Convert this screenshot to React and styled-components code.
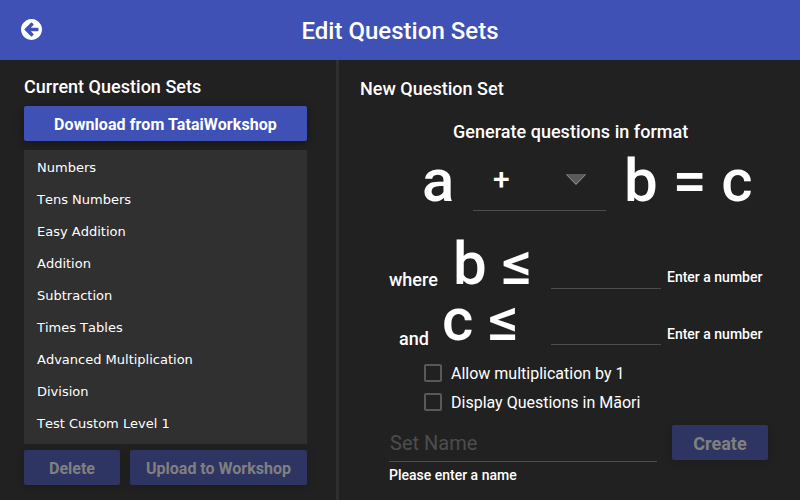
import React from "react";
import styled, { createGlobalStyle } from "styled-components";

const GlobalStyle = createGlobalStyle`
  * { box-sizing: border-box; }
  html, body { margin: 0; background: #212121; }
  body { overflow: hidden; }
`;

const Page = styled.div`
  width: 800px;
  height: 500px;
  display: flex;
  flex-direction: column;
  background: #212121;
  color: #fff;
  font-family: Roboto, sans-serif;
`;

const Header = styled.header`
  height: 60px;
  flex: none;
  display: grid;
  grid-template-columns: 62px 1fr 62px;
  align-items: center;
  background: #3f51b5;
`;

const BackButton = styled.button`
  width: 21px;
  height: 21px;
  margin: 0 0 1px 21px;
  padding: 0;
  border: 0;
  background: none;
  color: #fff;
  display: flex;
  svg { width: 21px; height: 21px; }
`;

const PageTitle = styled.h1`
  margin: 2px 0 0;
  text-align: center;
  font-size: 24px;
  font-weight: 500;
  line-height: 28px;
  letter-spacing: 0.02px;
`;

const Columns = styled.main`
  flex: 1;
  display: grid;
  grid-template-columns: 336px 1fr;
  min-height: 0;
`;

const SetsPanel = styled.section`
  padding: 16px 29px 0 24px;
`;

const PanelTitle = styled.h2`
  margin: 0;
  font-size: 18px;
  font-weight: 500;
  line-height: 21px;
  letter-spacing: 0.02px;
  white-space: nowrap;
`;

const Button = styled.button`
  display: flex;
  align-items: center;
  justify-content: center;
  flex: none;
  width: ${(p) => p.$width}px;
  height: 35px;
  padding: 2px 0 0;
  border: 0;
  border-radius: 2px;
  background: ${(p) => (p.disabled ? "#2e3563" : "#3f51b5")};
  color: ${(p) => (p.disabled ? "#808080" : "#fff")};
  box-shadow: 0 2px 8px rgba(0, 0, 0, ${(p) => (p.disabled ? 0.18 : 0.35)});
  font: 700 ${(p) => p.$size || 16}px Roboto, sans-serif;
  white-space: nowrap;
`;

const DownloadButton = styled(Button)`
  margin-top: 9px;
  letter-spacing: 0.08px;
`;

const SetList = styled.ul`
  height: 294px;
  margin: 9px 0 6px;
  padding: 2px 0 0;
  list-style: none;
  overflow: hidden;
  background: #303030;
`;

const SetItem = styled.li`
  height: 32px;
  padding-left: 13px;
  font: 13px/32px "DejaVu Sans", sans-serif;
  font-kerning: none;
`;

const ButtonRow = styled.div`
  display: flex;
  gap: 10px;
`;

const EditorPanel = styled.section`
  border-left: 3px solid #2f2f2f;
  padding: 18px 0 0 21px;
`;

const FormatHeading = styled.h3`
  margin: 22px 0 0 93px;
  font-size: 18px;
  font-weight: 500;
  line-height: 21px;
  letter-spacing: 0.03px;
`;

const Row = styled.div`
  display: flex;
  align-items: flex-start;
  height: ${(p) => p.$height}px;
  margin-top: ${(p) => p.$gap || 0}px;
  padding-left: ${(p) => p.$indent}px;
`;

const Symbol = styled.span`
  width: ${(p) => p.$width}px;
  flex: none;
  font-size: 60px;
  font-weight: 500;
  line-height: 70px;
  white-space: nowrap;
`;

const OperatorSelect = styled.div`
  width: 133px;
  height: 60px;
  margin: 5px 18px 0 0;
  padding: 10px 20px 0;
  display: flex;
  justify-content: space-between;
  align-items: flex-start;
  border-bottom: 1px solid #4d4d4d;
  font-size: 30px;
  font-weight: 500;
  line-height: 35px;
  svg { margin-top: 13px; }
`;

const Connective = styled.span`
  width: ${(p) => p.$width}px;
  flex: none;
  padding-top: ${(p) => p.$drop}px;
  font-size: 18px;
  font-weight: 500;
  line-height: 21px;
`;

const NumberInput = styled.input`
  width: 110px;
  height: 30px;
  margin: ${(p) => p.$drop}px 6px 0 0;
  padding: 0;
  border: 0;
  border-bottom: 1px solid #4d4d4d;
  background: none;
  color: #fff;
  outline: none;
`;

const Hint = styled.span`
  padding-top: ${(p) => p.$drop || 0}px;
  font-size: 14px;
  font-weight: 500;
  line-height: 16px;
  white-space: nowrap;
`;

const CheckRow = styled.label`
  display: flex;
  align-items: center;
  gap: 9px;
  height: 29px;
  padding-left: 64px;
  font-size: 16px;
  line-height: 19px;
`;

const CheckBox = styled.span`
  width: 18px;
  height: 18px;
  margin-bottom: 2px;
  border: 2px solid #595959;
  border-radius: 2px;
`;

const NameField = styled.div`
  width: 268px;
  margin-right: 15px;
`;

const NameInput = styled.input`
  display: block;
  width: 100%;
  height: 37px;
  margin-bottom: 3px;
  padding: 0 0 0 1px;
  border: 0;
  border-bottom: 1px solid #4d4d4d;
  background: none;
  color: #fff;
  font: 20px Roboto, sans-serif;
  outline: none;
  &::placeholder { color: #4d4d4d; opacity: 1; }
`;

const sets = [
  "Numbers",
  "Tens Numbers",
  "Easy Addition",
  "Addition",
  "Subtraction",
  "Times Tables",
  "Advanced Multiplication",
  "Division",
  "Test Custom Level 1",
];

function BackIcon() {
  return (
    <svg viewBox="0 0 1536 1536" fill="currentColor">
      <path d="M1280 832v-128q0-26-19-45t-45-19h-502l189-189q19-19 19-45t-19-45l-91-91q-18-18-45-18t-45 18l-362 362-91 91q-18 18-18 45t18 45l91 91 362 362q18 18 45 18t45-18l91-91q18-18 18-45t-18-45l-189-189h502q26 0 45-19t19-45zm256-64q0 209-103 385.5t-279.5 279.5-385.5 103-385.5-103-279.5-279.5-103-385.5 103-385.5 279.5-279.5 385.5-103 385.5 103 279.5 279.5 103 385.5z" />
    </svg>
  );
}

function CaretIcon() {
  return (
    <svg width="20" height="11" viewBox="0 0 20 11">
      <path d="M0 0H20L10 11Z" fill="#5a5a5a" />
      <path d="M0 .2L10 10.4L20 .2" fill="none" stroke="#a8a8a8" strokeWidth=".8" />
    </svg>
  );
}

export default function App() {
  return (
    <Page>
      <GlobalStyle />
      <Header>
        <BackButton aria-label="Back"><BackIcon /></BackButton>
        <PageTitle>Edit Question Sets</PageTitle>
      </Header>
      <Columns>
        <SetsPanel>
          <PanelTitle>Current Question Sets</PanelTitle>
          <DownloadButton $width={283}>Download from TataiWorkshop</DownloadButton>
          <SetList>
            {sets.map((name) => <SetItem key={name}>{name}</SetItem>)}
          </SetList>
          <ButtonRow>
            <Button $width={96} disabled>Delete</Button>
            <Button $width={177} disabled>Upload to Workshop</Button>
          </ButtonRow>
        </SetsPanel>
        <EditorPanel>
          <PanelTitle>New Question Set</PanelTitle>
          <FormatHeading>Generate questions in format</FormatHeading>
          <Row $height={83} $gap={4} $indent={62}>
            <Symbol $width={51}>a</Symbol>
            <OperatorSelect>
              <span>+</span>
              <CaretIcon />
            </OperatorSelect>
            <Symbol>b = c</Symbol>
          </Row>
          <Row $height={56} $indent={29}>
            <Connective $width={64} $drop={40}>where</Connective>
            <Symbol $width={98}>b ≤</Symbol>
            <NumberInput $drop={30} aria-label="Maximum b" />
            <Hint $drop={40}>Enter a number</Hint>
          </Row>
          <Row $height={74} $indent={39}>
            <Connective $width={43} $drop={43}>and</Connective>
            <Symbol $width={109}>c ≤</Symbol>
            <NumberInput $drop={30} aria-label="Maximum c" />
            <Hint $drop={41}>Enter a number</Hint>
          </Row>
          <CheckRow><CheckBox />Allow multiplication by 1</CheckRow>
          <CheckRow><CheckBox />Display Questions in Māori</CheckRow>
          <Row $height={62} $gap={8} $indent={29}>
            <NameField>
              <NameInput placeholder="Set Name" />
              <Hint>Please enter a name</Hint>
            </NameField>
            <Button $width={96} $size={18} disabled>Create</Button>
          </Row>
        </EditorPanel>
      </Columns>
    </Page>
  );
}
